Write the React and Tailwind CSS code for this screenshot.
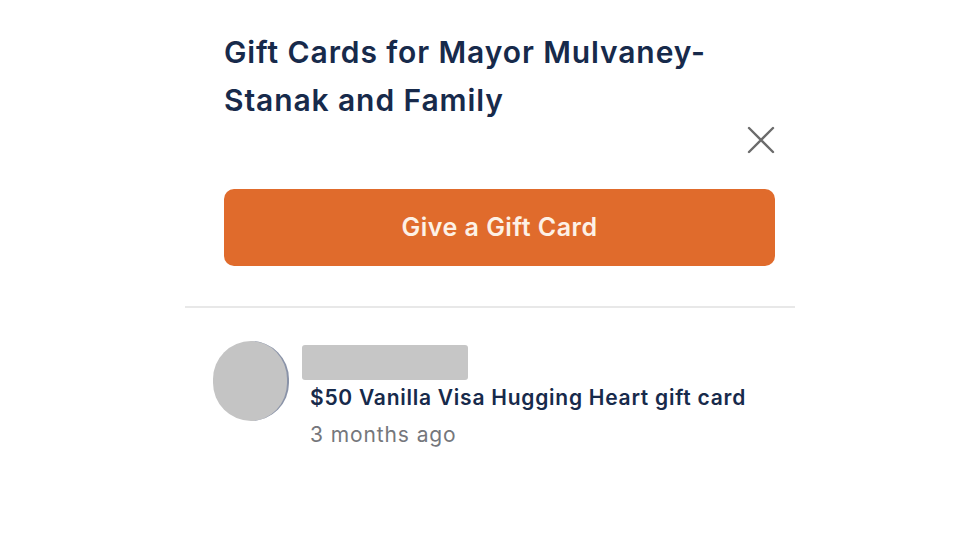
import React from 'react';

const CloseIcon = () => (
  <svg width="28" height="28" viewBox="0 0 28 28" fill="none" stroke="#6b6b6b" strokeWidth="2.4" strokeLinecap="round">
    <path d="M2 2 L26 26 M26 2 L2 26" />
  </svg>
);

const App = () => {
  return (
    <div className="w-full h-[551px] bg-white flex justify-center" style={{ fontFamily: 'Inter, "Noto Sans", sans-serif' }}>
      <div className="w-[610px] flex flex-col">
        <div className="pl-[39px] pr-[20px] pt-[28px]">
          <h1 className="text-[30px] leading-[48px] font-semibold text-[#172a4b] tracking-[0.9px]">
            Gift Cards for Mayor Mulvaney-
            <br />
            Stanak and Family
          </h1>
          <div className="flex justify-end mt-[2px]">
            <button className="w-[28px] h-[28px]">
              <CloseIcon />
            </button>
          </div>
          <button className="mt-[35px] w-full h-[77px] rounded-[10px] bg-[#e06b2c] text-[#fdf1e6] text-[25px] font-semibold tracking-[0.5px]">
            Give a Gift Card
          </button>
        </div>

        <div className="mt-[40px] h-[2px] bg-[#e8e8e8]" />

        <div className="flex pl-[28px] pt-[33px]">
          <div className="w-[76px] h-[80px] rounded-full bg-[#c4c4c4] border-r-2 border-[#8a93a8]" />
          <div className="ml-[13px] pt-[4px] flex flex-col">
            <div className="w-[166px] h-[35px] rounded-[3px] bg-[#c6c6c6]" />
            <div className="pl-[8px] mt-[2px] text-[21px] leading-[32px] font-semibold text-[#172a4b] tracking-[0.75px]">
              $50 Vanilla Visa Hugging Heart gift card
            </div>
            <div className="pl-[8px] mt-[5px] text-[21px] leading-[32px] text-[#75777c] tracking-[0.9px]">
              3 months ago
            </div>
          </div>
        </div>
      </div>
    </div>
  );
};

export default App;
